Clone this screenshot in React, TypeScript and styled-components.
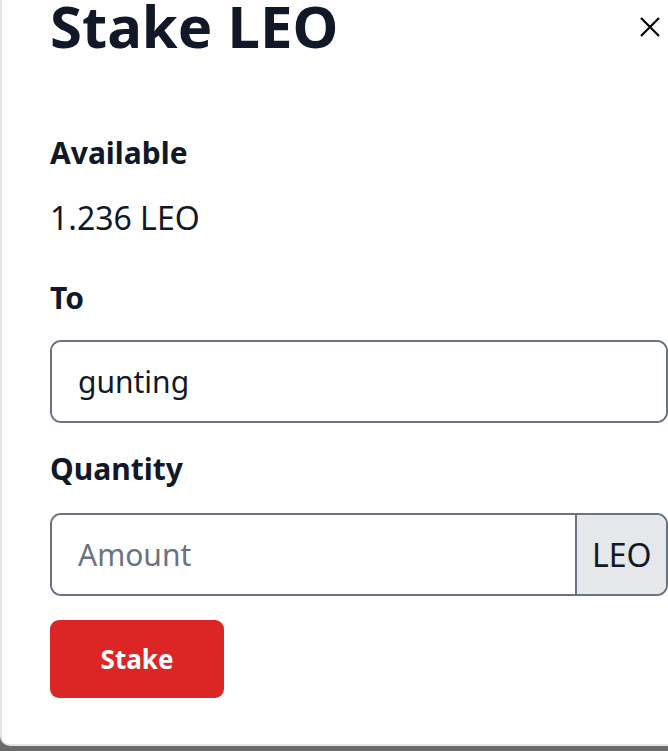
import styled, { createGlobalStyle } from "styled-components";

const GlobalStyle = createGlobalStyle`
  html, body {
    margin: 0;
    padding: 0;
    background: #6b6b6b;
    overflow: hidden;
  }
  * { box-sizing: border-box; }
`;

const Backdrop = styled.div`
  width: 668px;
  height: 751px;
  overflow: hidden;
  background: #6b6b6b;
`;

const Modal = styled.div`
  width: 700px;
  height: 746px;
  background: #ffffff;
  border-left: 2px solid #e6e6e6;
  border-bottom: 2px solid #e6e6e6;
  border-bottom-left-radius: 10px;
  padding: 0 33px 0 48px;
  font-family: "Noto Sans", "Open Sans", sans-serif;
  color: #111827;
`;

const Header = styled.div`
  display: flex;
  align-items: flex-start;
  justify-content: space-between;
  width: 618px;
  height: 110px;
`;

const Title = styled.h1`
  margin: -14px 0 0;
  font-size: 58px;
  line-height: 80px;
  font-weight: 700;
  color: #111827;
`;

const CloseButton = styled.button`
  border: none;
  background: none;
  padding: 0;
  margin: 16px 7px 0 0;
  width: 22px;
  height: 22px;
  cursor: pointer;
  svg { display: block; }
`;

const Label = styled.div<{ $top: number }>`
  font-size: 30px;
  line-height: 36px;
  font-weight: 700;
  margin-top: ${(p) => p.$top}px;
`;

const Value = styled.div`
  font-size: 32px;
  line-height: 36px;
  font-weight: 400;
  margin-top: 29px;
`;

const Field = styled.div<{ $top: number }>`
  display: flex;
  width: 618px;
  height: 83px;
  margin-top: ${(p) => p.$top}px;
  border: 2px solid #6b7280;
  border-radius: 11px;
  overflow: hidden;
`;

const Input = styled.input`
  flex: 1;
  min-width: 0;
  border: none;
  outline: none;
  padding: 0 26px;
  font-family: inherit;
  font-size: 30px;
  color: #111827;
  background: #ffffff;
  &::placeholder { color: #6b7280; }
`;

const Addon = styled.span`
  display: flex;
  align-items: center;
  padding: 0 0 0 15px;
  width: 91px;
  background: #e5e7eb;
  border-left: 2px solid #6b7280;
  font-size: 32px;
  color: #111827;
`;

const StakeButton = styled.button`
  display: block;
  margin-top: 24px;
  width: 174px;
  height: 78px;
  border: none;
  border-radius: 9px;
  background: #dc2626;
  color: #ffffff;
  font-family: inherit;
  font-size: 26px;
  font-weight: 700;
  cursor: pointer;
`;

export default function App() {
  return (
    <Backdrop>
      <GlobalStyle />
      <Modal>
        <Header>
          <Title>Stake LEO</Title>
          <CloseButton aria-label="Close">
            <svg width="22" height="22" viewBox="0 0 22 22" fill="none">
              <path d="M2 2L20 20M20 2L2 20" stroke="#000" strokeWidth="2.2" />
            </svg>
          </CloseButton>
        </Header>
        <Label $top={25}>Available</Label>
        <Value>1.236 LEO</Value>
        <Label $top={44}>To</Label>
        <Field $top={24}>
          <Input defaultValue="gunting" />
        </Field>
        <Label $top={28}>Quantity</Label>
        <Field $top={26}>
          <Input placeholder="Amount" />
          <Addon>LEO</Addon>
        </Field>
        <StakeButton>Stake</StakeButton>
      </Modal>
    </Backdrop>
  );
}
